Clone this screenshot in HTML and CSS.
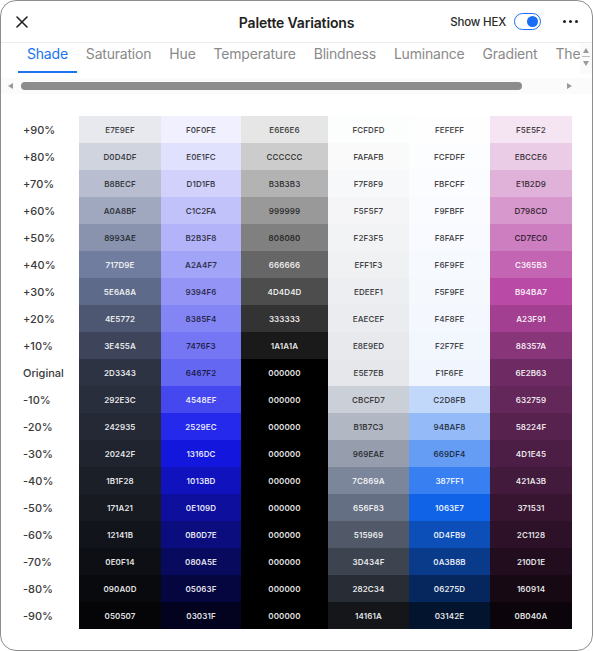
FILE: index.html
```html
<!DOCTYPE html>
<html>
<head>
<meta charset="utf-8">
<link rel="stylesheet" href="styles.css">
</head>
<body>
<div class="dialog">
  <header class="header">
    <button class="icon-btn close" aria-label="Close">
      <svg width="12" height="12" viewBox="0 0 12 12"><path d="M1 1L11 11M11 1L1 11" stroke="#222" stroke-width="1.6" stroke-linecap="round"/></svg>
    </button>
    <div class="title">Palette Variations</div>
    <div class="actions">
      <span class="hex-label">Show HEX</span>
      <span class="toggle"><span class="knob"></span></span>
      <span class="more"><i></i><i></i><i></i></span>
    </div>
  </header>

  <div class="tabbar">
    <nav class="tabs">
      <span class="tab active">Shade</span>
      <span class="tab">Saturation</span>
      <span class="tab">Hue</span>
      <span class="tab">Temperature</span>
      <span class="tab">Blindness</span>
      <span class="tab">Luminance</span>
      <span class="tab">Gradient</span>
      <span class="tab">Theme</span>
    </nav>
    <div class="vscroll">
      <span class="arr up"></span>
      <span class="vline"></span>
      <span class="arr down"></span>
    </div>
  </div>

  <div class="hscroll">
    <span class="harr left"></span>
    <span class="thumb-track"><span class="thumb"></span></span>
    <span class="harr right"></span>
  </div>

  <div class="grid">
    <div class="lbl">+90%</div><div class="c d" style="background:#E7E9EF">E7E9EF</div><div class="c d" style="background:#F0F0FE">F0F0FE</div><div class="c d" style="background:#E6E6E6">E6E6E6</div><div class="c d" style="background:#FCFDFD">FCFDFD</div><div class="c d" style="background:#FEFEFF">FEFEFF</div><div class="c d" style="background:#F5E5F2">F5E5F2</div>
    <div class="lbl">+80%</div><div class="c d" style="background:#D0D4DF">D0D4DF</div><div class="c d" style="background:#E0E1FC">E0E1FC</div><div class="c d" style="background:#CCCCCC">CCCCCC</div><div class="c d" style="background:#FAFAFB">FAFAFB</div><div class="c d" style="background:#FCFDFF">FCFDFF</div><div class="c d" style="background:#EBCCE6">EBCCE6</div>
    <div class="lbl">+70%</div><div class="c d" style="background:#B8BECF">B8BECF</div><div class="c d" style="background:#D1D1FB">D1D1FB</div><div class="c d" style="background:#B3B3B3">B3B3B3</div><div class="c d" style="background:#F7F8F9">F7F8F9</div><div class="c d" style="background:#FBFCFF">FBFCFF</div><div class="c d" style="background:#E1B2D9">E1B2D9</div>
    <div class="lbl">+60%</div><div class="c d" style="background:#A0A8BF">A0A8BF</div><div class="c d" style="background:#C1C2FA">C1C2FA</div><div class="c d" style="background:#999999">999999</div><div class="c d" style="background:#F5F5F7">F5F5F7</div><div class="c d" style="background:#F9FBFF">F9FBFF</div><div class="c d" style="background:#D798CD">D798CD</div>
    <div class="lbl">+50%</div><div class="c d" style="background:#8993AE">8993AE</div><div class="c d" style="background:#B2B3F8">B2B3F8</div><div class="c d" style="background:#808080">808080</div><div class="c d" style="background:#F2F3F5">F2F3F5</div><div class="c d" style="background:#F8FAFF">F8FAFF</div><div class="c d" style="background:#CD7EC0">CD7EC0</div>
    <div class="lbl">+40%</div><div class="c" style="background:#717D9E">717D9E</div><div class="c d" style="background:#A2A4F7">A2A4F7</div><div class="c" style="background:#666666">666666</div><div class="c d" style="background:#EFF1F3">EFF1F3</div><div class="c d" style="background:#F6F9FE">F6F9FE</div><div class="c" style="background:#C365B3">C365B3</div>
    <div class="lbl">+30%</div><div class="c" style="background:#5E6A8A">5E6A8A</div><div class="c d" style="background:#9394F6">9394F6</div><div class="c" style="background:#4D4D4D">4D4D4D</div><div class="c d" style="background:#EDEEF1">EDEEF1</div><div class="c d" style="background:#F5F9FE">F5F9FE</div><div class="c" style="background:#B94BA7">B94BA7</div>
    <div class="lbl">+20%</div><div class="c" style="background:#4E5772">4E5772</div><div class="c d" style="background:#8385F4">8385F4</div><div class="c" style="background:#333333">333333</div><div class="c d" style="background:#EAECEF">EAECEF</div><div class="c d" style="background:#F4F8FE">F4F8FE</div><div class="c" style="background:#A23F91">A23F91</div>
    <div class="lbl">+10%</div><div class="c" style="background:#3E455A">3E455A</div><div class="c d" style="background:#7476F3">7476F3</div><div class="c" style="background:#1A1A1A">1A1A1A</div><div class="c d" style="background:#E8E9ED">E8E9ED</div><div class="c d" style="background:#F2F7FE">F2F7FE</div><div class="c" style="background:#88357A">88357A</div>
    <div class="lbl">Original</div><div class="c" style="background:#2D3343">2D3343</div><div class="c d" style="background:#6467F2">6467F2</div><div class="c" style="background:#000000">000000</div><div class="c d" style="background:#E5E7EB">E5E7EB</div><div class="c d" style="background:#F1F6FE">F1F6FE</div><div class="c" style="background:#6E2B63">6E2B63</div>
    <div class="lbl">-10%</div><div class="c" style="background:#292E3C">292E3C</div><div class="c" style="background:#4548EF">4548EF</div><div class="c" style="background:#000000">000000</div><div class="c d" style="background:#CBCFD7">CBCFD7</div><div class="c d" style="background:#C2D8FB">C2D8FB</div><div class="c" style="background:#632759">632759</div>
    <div class="lbl">-20%</div><div class="c" style="background:#242935">242935</div><div class="c" style="background:#2529EC">2529EC</div><div class="c" style="background:#000000">000000</div><div class="c d" style="background:#B1B7C3">B1B7C3</div><div class="c d" style="background:#94BAF8">94BAF8</div><div class="c" style="background:#58224F">58224F</div>
    <div class="lbl">-30%</div><div class="c" style="background:#20242F">20242F</div><div class="c" style="background:#1316DC">1316DC</div><div class="c" style="background:#000000">000000</div><div class="c d" style="background:#969EAE">969EAE</div><div class="c d" style="background:#669DF4">669DF4</div><div class="c" style="background:#4D1E45">4D1E45</div>
    <div class="lbl">-40%</div><div class="c" style="background:#1B1F28">1B1F28</div><div class="c" style="background:#1013BD">1013BD</div><div class="c" style="background:#000000">000000</div><div class="c" style="background:#7C869A">7C869A</div><div class="c" style="background:#387FF1">387FF1</div><div class="c" style="background:#421A3B">421A3B</div>
    <div class="lbl">-50%</div><div class="c" style="background:#171A21">171A21</div><div class="c" style="background:#0E109D">0E109D</div><div class="c" style="background:#000000">000000</div><div class="c" style="background:#656F83">656F83</div><div class="c" style="background:#1063E7">1063E7</div><div class="c" style="background:#371531">371531</div>
    <div class="lbl">-60%</div><div class="c" style="background:#12141B">12141B</div><div class="c" style="background:#0B0D7E">0B0D7E</div><div class="c" style="background:#000000">000000</div><div class="c" style="background:#515969">515969</div><div class="c" style="background:#0D4FB9">0D4FB9</div><div class="c" style="background:#2C1128">2C1128</div>
    <div class="lbl">-70%</div><div class="c" style="background:#0E0F14">0E0F14</div><div class="c" style="background:#080A5E">080A5E</div><div class="c" style="background:#000000">000000</div><div class="c" style="background:#3D434F">3D434F</div><div class="c" style="background:#0A3B8B">0A3B8B</div><div class="c" style="background:#210D1E">210D1E</div>
    <div class="lbl">-80%</div><div class="c" style="background:#090A0D">090A0D</div><div class="c" style="background:#05063F">05063F</div><div class="c" style="background:#000000">000000</div><div class="c" style="background:#282C34">282C34</div><div class="c" style="background:#06275D">06275D</div><div class="c" style="background:#160914">160914</div>
    <div class="lbl">-90%</div><div class="c" style="background:#050507">050507</div><div class="c" style="background:#03031F">03031F</div><div class="c" style="background:#000000">000000</div><div class="c" style="background:#14161A">14161A</div><div class="c" style="background:#03142E">03142E</div><div class="c" style="background:#0B040A">0B040A</div>
  </div>
</div>
</body>
</html>
```

FILE: styles.css
```css
* { box-sizing: border-box; }
html, body { margin: 0; padding: 0; background: #fff; }
body { font-family: Inter, "Noto Sans", "Liberation Sans", sans-serif; color: #222; }

.dialog {
  width: 593px;
  height: 651px;
  border: 1px solid #8e8e8e;
  border-radius: 16px;
  overflow: hidden;
  background: #fff;
}

.header {
  height: 42px;
  border-bottom: 1px solid #ececec;
  display: flex;
  align-items: center;
  padding: 0 14px 0 15px;
  position: relative;
}
.icon-btn {
  border: 0; background: none; padding: 0; margin: 0;
  width: 12px; height: 12px; display: flex; margin-top: 1px;
}
.title {
  position: absolute;
  left: 0; right: 0; top: 0; bottom: 0;
  display: flex; align-items: center; justify-content: center;
  font-size: 14px; font-weight: 600; color: #1f1f1f;
  letter-spacing: -0.15px;
  pointer-events: none;
  padding-top: 1px;
}
.actions {
  margin-left: auto;
  display: flex;
  align-items: center;
}
.hex-label { font-size: 11.5px; font-weight: 500; color: #2a2a2a; letter-spacing: -0.2px; }
.toggle {
  margin-left: 8px;
  width: 27px; height: 17px;
  border: 1.5px solid #1a6ef5;
  border-radius: 9px;
  display: flex; align-items: center; justify-content: flex-end;
  padding-right: 2px;
}
.knob { width: 11px; height: 11px; border-radius: 50%; background: #1a6ef5; }
.more { margin-left: 22px; display: flex; gap: 3px; align-items: center; }
.more i { width: 3px; height: 3px; border-radius: 50%; background: #222; display: block; }

.tabbar { display: flex; height: 31px; }
.tabs {
  flex: 1;
  display: flex;
  overflow: hidden;
  padding-left: 17px;
  white-space: nowrap;
}
.tab {
  font-size: 14px;
  line-height: 20px;
  letter-spacing: -0.2px;
  color: #8a8a8a;
  padding: 1px 9px 7px;
  border-bottom: 2px solid transparent;
  height: 30px;
  flex: none;
}
.tab.active { color: #1a73f0; border-bottom-color: #1a73f0; }

.vscroll {
  width: 12px;
  display: flex; flex-direction: column; align-items: center;
  padding-top: 5px;
  background: #fafafa;
}
.arr { width: 0; height: 0; border-left: 3.5px solid transparent; border-right: 3.5px solid transparent; }
.arr.up { border-bottom: 5px solid #9a9a9a; }
.arr.down { border-top: 5px solid #9a9a9a; margin-top: 4px; }
.vline { width: 8px; height: 1px; background: #bdbdbd; margin-top: 3px; }

.hscroll {
  margin-top: 4px;
  height: 16px;
  display: flex; align-items: center;
  padding: 0 20px 0 7px;
  background: #fbfbfb;
}
.harr { width: 0; height: 0; border-top: 3.5px solid transparent; border-bottom: 3.5px solid transparent; }
.harr.left { border-right: 5px solid #9a9a9a; }
.harr.right { border-left: 5px solid #9a9a9a; }
.thumb-track { flex: 1; display: flex; padding: 0 45px 0 8px; }
.thumb { flex: 1; height: 8px; border-radius: 4px; background: #8c8c8c; }

.grid {
  margin: 22px 0 0 21px;
  display: grid;
  grid-template-columns: 57px 82px 80px 87px 81px 81px 82px;
  grid-auto-rows: 27px;
}
.lbl {
  font-size: 11px;
  font-weight: 500;
  color: #3a3a3a;
  display: flex; align-items: center;
  padding-left: 1px;
}
.c {
  display: flex; align-items: center; justify-content: center;
  font-size: 8px;
  font-weight: 600;
  color: rgba(255,255,255,0.9);
  letter-spacing: 0.1px;
}
.c.d { color: rgba(0,0,0,0.72); }
```
